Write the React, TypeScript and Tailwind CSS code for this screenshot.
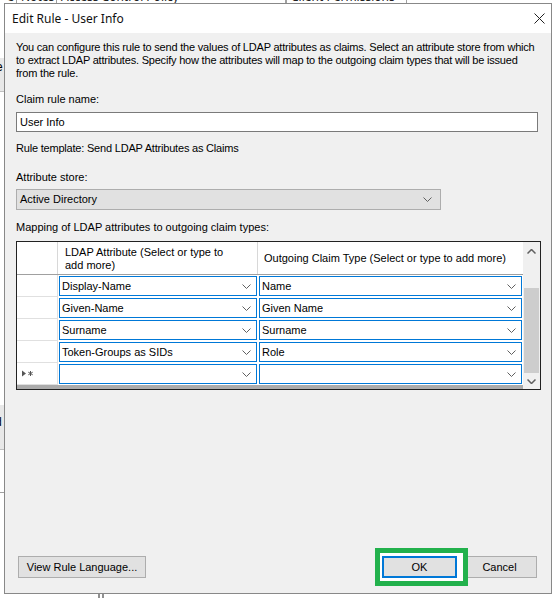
import React from "react";

const Chevron = () => (
    <svg width="9" height="5" viewBox="0 0 9 5" className="shrink-0">
        <path d="M0.5 0.5 L4.5 4.5 L8.5 0.5" fill="none" stroke="#606060" strokeWidth="1" />
    </svg>
);

const rows = [
    { attr: "Display-Name", claim: "Name" },
    { attr: "Given-Name", claim: "Given Name" },
    { attr: "Surname", claim: "Surname" },
    { attr: "Token-Groups as SIDs", claim: "Role" },
    { attr: "", claim: "" },
];

function ComboCell({ value }: { value: string }) {
    return (
        <div className="px-px py-px h-full">
            <div className="h-full flex items-center justify-between border border-[#0078d7] bg-white pl-[2px] pr-[5px]">
                <span className="whitespace-nowrap">{value}</span>
                <Chevron />
            </div>
        </div>
    );
}

export default function App() {
    return (
        <div className="relative w-[557px] h-[598px] bg-white overflow-hidden font-['Liberation_Sans',Arial,sans-serif] text-[11px] text-black">
            {/* window behind the dialog */}
            <div className="absolute left-0 top-[-12px] flex h-[15px] text-[12px] text-[#222] font-['Noto_Sans',sans-serif]">
                <div className="w-[17px] border-r border-[#a0a0a0] text-right pr-[2px]">e</div>
                <div className="w-[40px] border-r border-[#a0a0a0] pl-[4px]">Notes</div>
                <div className="w-[230px] border-r-2 border-[#a0a0a0] pl-[4px]">Access Control Policy</div>
                <div className="w-[120px] border-r border-[#a0a0a0] pl-[4px]">Client Permissions</div>
                <div className="w-[160px] border-r border-[#a0a0a0]" />
            </div>
            <div className="absolute left-0 top-[58px] w-[4px] h-[34px] bg-[#e8e8e8] border-b border-[#c0c0c0] overflow-hidden text-[12px] leading-[14px] pt-[2px]">
                <span className="ml-[-4px]">e</span>
            </div>
            <div className="absolute left-0 top-[405px] w-[4px] h-[88px] border-b border-[#a0a0a0] overflow-hidden">
                <div className="h-[45px] bg-[#e8e8e8] border-b border-[#c0c0c0] text-[12px] leading-[14px] pt-[10px]">
                    <span className="ml-[-5px]">d</span>
                </div>
            </div>
            <div className="absolute left-[98px] top-[590px] w-[6px] h-[10px] border-x-2 border-[#909090]" />

            {/* dialog */}
            <div className="absolute left-[4px] top-[3px] w-[548px] h-[591px] border border-[#888] bg-[#f0f0f0] flex flex-col">
                <div className="h-[29px] bg-white flex items-center justify-between pl-[7px] pr-[6px] shrink-0">
                    <span className="font-['Noto_Sans',sans-serif] text-[12px] text-[#111]">Edit Rule - User Info</span>
                    <svg width="11" height="11" viewBox="0 0 11 11">
                        <path d="M0.5 0.5 L10.5 10.5 M10.5 0.5 L0.5 10.5" stroke="#222" strokeWidth="1" />
                    </svg>
                </div>

                <div className="flex-1 flex flex-col pl-[11px] pr-[10px] pt-[8px] pb-[15px]">
                    <p className="leading-[13px] whitespace-nowrap tracking-[-0.2px]">
                        You can configure this rule to send the values of LDAP attributes as claims. Select an attribute store from which
                        <br />
                        to extract LDAP attributes. Specify how the attributes will map to the outgoing claim types that will be issued
                        <br />
                        from the rule.
                    </p>

                    <div className="mt-[13px] leading-[13px]">Claim rule name:</div>
                    <div className="mt-[6px] w-[522px] h-[20px] bg-white border border-[#7a7a7a] flex items-center pl-[3px]">
                        User Info
                    </div>

                    <div className="mt-[10px] leading-[13px] tracking-[-0.2px]">Rule template: Send LDAP Attributes as Claims</div>

                    <div className="mt-[16px] leading-[13px]">Attribute store:</div>
                    <div className="mt-[5px] w-[425px] h-[21px] bg-[#e1e1e1] border border-[#adadad] flex items-center justify-between pl-[3px] pr-[8px]">
                        <span>Active Directory</span>
                        <Chevron />
                    </div>

                    <div className="mt-[11px] leading-[13px]">Mapping of LDAP attributes to outgoing claim types:</div>

                    <div className="mt-[7px] w-[525px] h-[149px] border border-[#222] flex bg-[#ababab]">
                        <div className="flex-1 flex flex-col">
                            <div className="grid grid-cols-[41px_200px_1fr] h-[33px] bg-white border-b border-[#a0a0a0]">
                                <div className="border-r border-[#d8d8d8]" />
                                <div className="border-r border-[#d8d8d8] pl-[7px] pt-[4px] leading-[13px]">
                                    LDAP Attribute (Select or type to
                                    <br />
                                    add more)
                                </div>
                                <div className="pl-[6px] flex items-center">Outgoing Claim Type (Select or type to add more)</div>
                            </div>
                            {rows.map((r, i) => (
                                <div key={i} className="grid grid-cols-[41px_200px_1fr] h-[22px] bg-white">
                                    <div className="border-r border-b border-[#e0e0e0] flex items-center pl-[5px]">
                                        {i === rows.length - 1 && (
                                            <svg width="12" height="7" viewBox="0 0 12 7">
                                                <path d="M0 0.5 L4 3.5 L0 6.5 Z" fill="#555" />
                                                <path d="M8.5 1 V6 M6.3 2.2 L10.7 4.8 M10.7 2.2 L6.3 4.8" stroke="#555" strokeWidth="1" />
                                            </svg>
                                        )}
                                    </div>
                                    <ComboCell value={r.attr} />
                                    <ComboCell value={r.claim} />
                                </div>
                            ))}
                        </div>
                        <div className="w-[17px] bg-[#f0f0f0] flex flex-col items-center">
                            <svg width="9" height="5" viewBox="0 0 9 5" className="mt-[7px]">
                                <path d="M0.5 4.5 L4.5 0.5 L8.5 4.5" fill="none" stroke="#606060" strokeWidth="1.5" />
                            </svg>
                            <div className="mt-[34px] w-[15px] h-[85px] bg-[#cdcdcd]" />
                            <svg width="9" height="5" viewBox="0 0 9 5" className="mt-[6px]">
                                <path d="M0.5 0.5 L4.5 4.5 L8.5 0.5" fill="none" stroke="#606060" strokeWidth="1.5" />
                            </svg>
                        </div>
                    </div>

                    <div className="flex-1" />

                    <div className="flex items-center">
                        <button className="ml-[2px] w-[128px] h-[22px] bg-[#e1e1e1] border border-[#adadad] text-[11px]">
                            View Rule Language...
                        </button>
                        <div className="flex-1" />
                        <div className="relative w-[75px] h-[22px]">
                            <div className="absolute left-[-7px] top-[-8px] right-[-11px] bottom-[-8px] border-[5px] border-[#22b14c] bg-white" />
                            <button className="relative w-full h-full bg-[#e1e1e1] border-2 border-[#0078d7] text-[11px]">
                                OK
                            </button>
                        </div>
                        <button className="ml-[5px] mr-[4px] w-[75px] h-[22px] bg-[#e1e1e1] border border-[#adadad] text-[11px]">
                            Cancel
                        </button>
                    </div>
                </div>
            </div>
        </div>
    );
}
